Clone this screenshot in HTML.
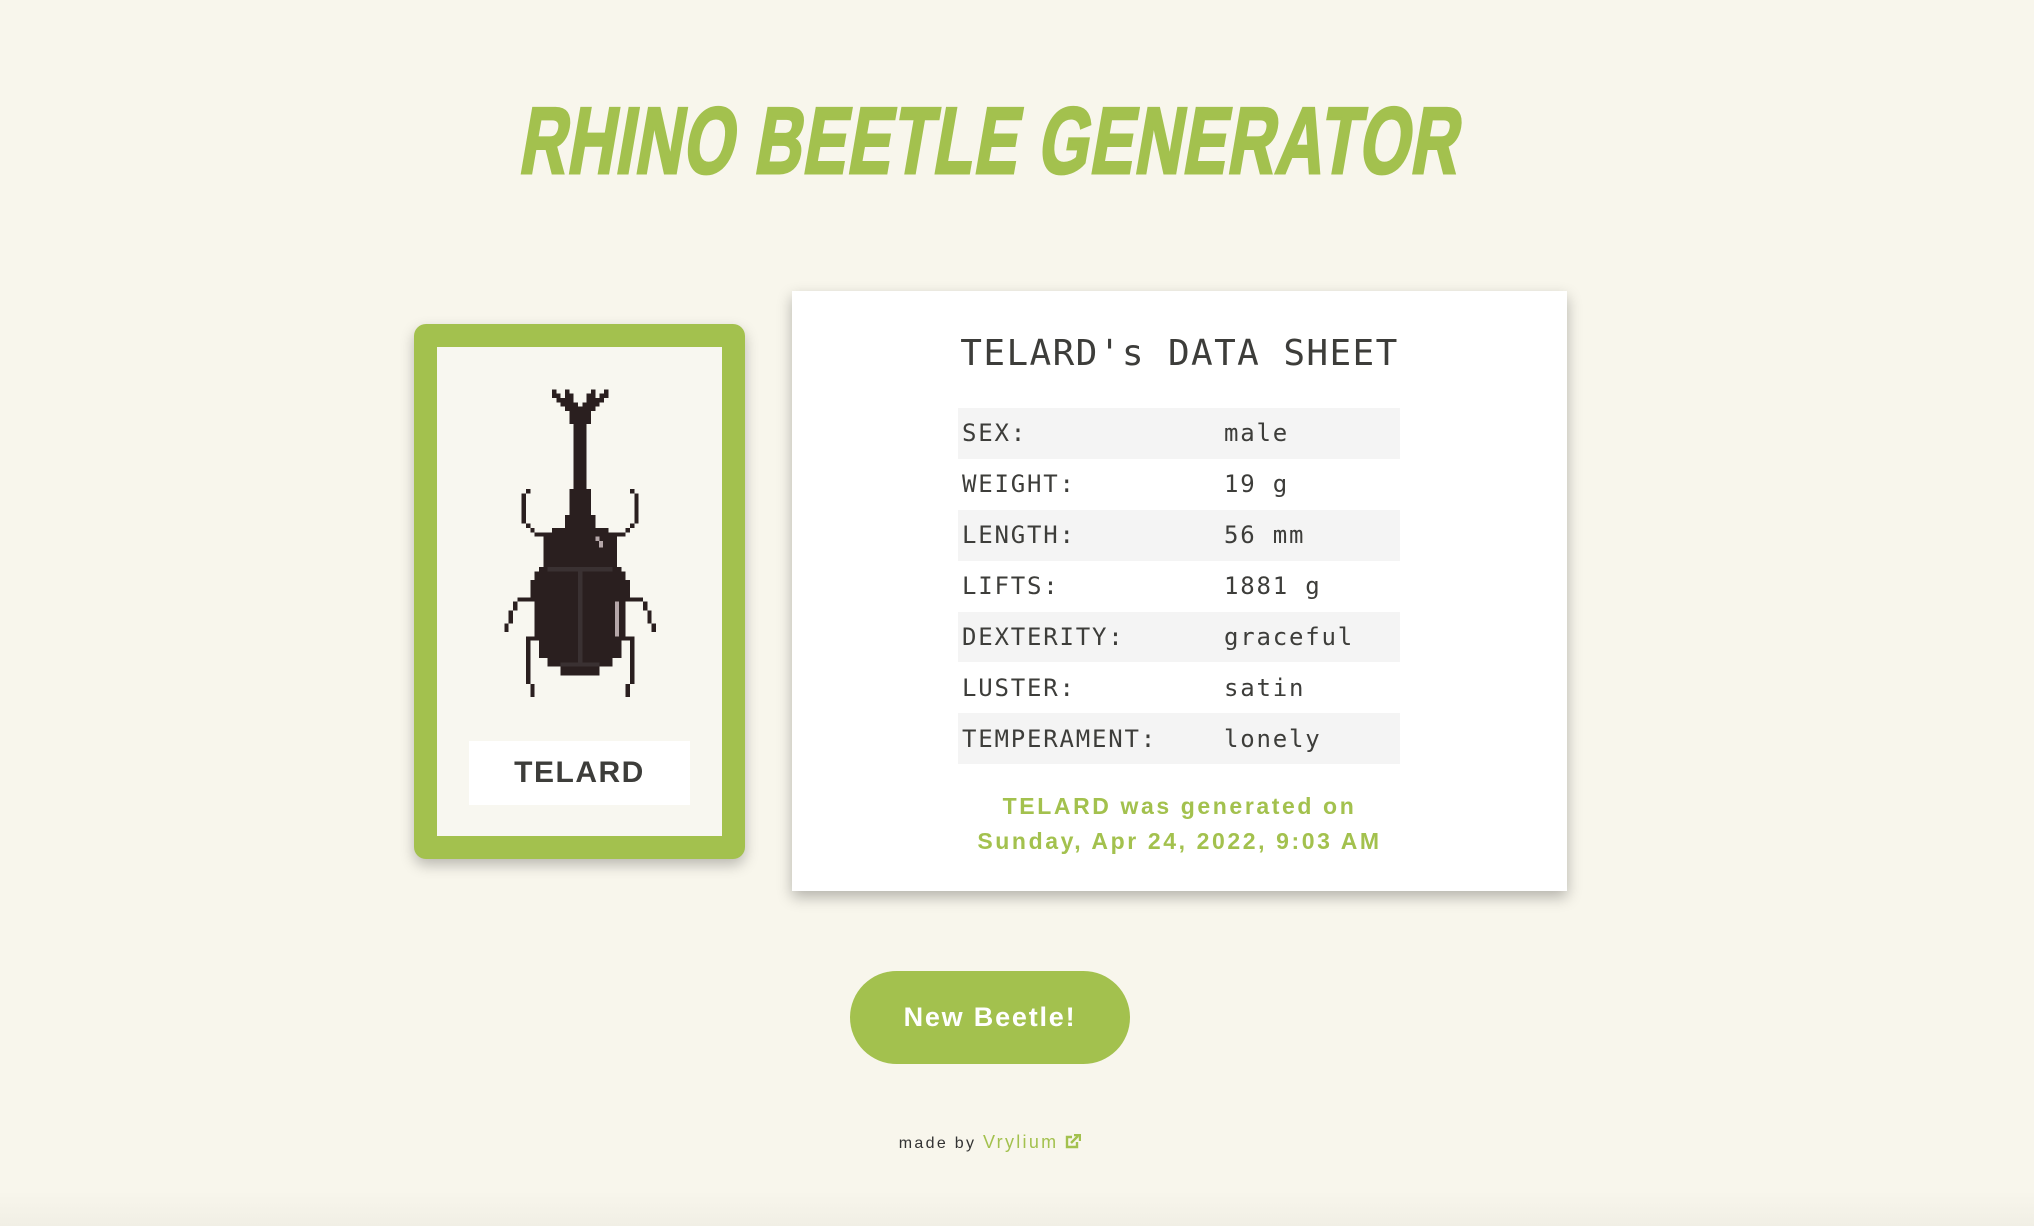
<!DOCTYPE html>
<html><head><meta charset="utf-8"><style>
html,body{margin:0;padding:0}
body{width:2034px;height:1226px;position:relative;overflow:hidden;background:linear-gradient(#f8f6ec 0,#f8f6ec 1190px,#f1efe5 1226px);font-family:"Liberation Sans",sans-serif}
.abs{position:absolute}
#title{left:0;width:1986px;top:86px;text-align:center;height:110px}
#title span{display:inline-block;font-weight:bold;font-size:94px;color:#a3c14e;-webkit-text-stroke:3px #a3c14e;letter-spacing:2px;transform:scaleX(0.69) skewX(-14deg);transform-origin:center;white-space:nowrap;line-height:110px}
#card{left:414px;top:324px;width:285px;height:489px;border:23px solid #a3c14e;border-radius:12px;background:#f8f7f0;box-shadow:0 6px 14px rgba(0,0,0,0.25)}
#name{left:469px;top:741px;width:221px;height:64px;background:#fff;text-align:center;line-height:64px;font-weight:bold;font-size:30px;letter-spacing:1.5px;color:#3d3d3a}
#sheet{left:792px;top:291px;width:775px;height:600px;background:#fff;box-shadow:0 6px 14px rgba(0,0,0,0.28)}
.mono{font-family:"DejaVu Sans Mono","Liberation Mono",monospace;color:#3d3d3a}
#sh{left:792px;width:775px;top:332px;text-align:center;font-size:36px;letter-spacing:1.4px;line-height:44px}
table{position:absolute;left:958px;top:408px;width:442px;border-collapse:collapse}
td{height:50.9px;padding:0;font-size:24px;letter-spacing:1.8px;vertical-align:middle}
td.l{padding-left:4px;width:262px}
tr:nth-child(odd){background:#f4f4f4}
#gen{left:792px;width:775px;top:789px;text-align:center;color:#a3c14e;font-weight:bold;font-size:23px;letter-spacing:2.6px;line-height:35px}
#btn{left:850px;top:971px;width:280px;height:93px;border-radius:47px;background:#a3c14e;color:#fff;font-weight:bold;font-size:27px;letter-spacing:1.8px;text-align:center;line-height:93px}
#foot{left:0;width:1980px;top:1130px;text-align:center;font-size:16px;letter-spacing:2.3px;color:#333;line-height:24px}
#foot b{font-weight:normal;color:#a3c14e;font-size:18px}
</style></head><body>
<div id="title" class="abs"><span>RHINO BEETLE GENERATOR</span></div>
<div id="card" class="abs"></div>
<svg class="abs" style="left:500px;top:385px" width="165" height="320" viewBox="0 0 38.077 73.85" shape-rendering="crispEdges">
<g fill="#2a1f1f">
<rect x="12" y="1" width="1" height="1"/><rect x="15" y="1" width="1" height="1"/><rect x="21" y="1" width="1" height="1"/><rect x="24" y="1" width="1" height="1"/>
<rect x="12" y="2" width="2" height="1"/><rect x="15" y="2" width="2" height="1"/><rect x="20" y="2" width="2" height="1"/><rect x="23" y="2" width="2" height="1"/>
<rect x="13" y="3" width="4" height="1"/><rect x="20" y="3" width="4" height="1"/>
<rect x="14" y="4" width="4" height="1"/><rect x="19" y="4" width="4" height="1"/>
<rect x="15" y="5" width="7" height="1"/>
<rect x="16" y="6" width="5" height="3"/>
<rect x="17" y="9" width="3" height="15"/>
<rect x="16" y="24" width="5" height="6"/>
<rect x="15" y="30" width="7" height="3"/>
<rect x="12" y="33" width="13" height="1"/>
<rect x="10" y="34" width="17" height="8"/>
<rect x="9" y="42" width="19" height="1"/>
<rect x="8" y="43" width="21" height="2"/>
<rect x="7" y="45" width="23" height="5"/>
<rect x="8" y="50" width="21" height="8"/>
<rect x="9" y="58" width="19" height="5"/>
<rect x="11" y="63" width="15" height="2"/>
<rect x="14" y="65" width="9" height="2"/>
<rect x="6" y="24" width="1" height="1"/><rect x="5" y="25" width="1" height="7"/><rect x="6" y="32" width="1" height="1"/><rect x="7" y="33" width="1" height="1"/><rect x="8" y="34" width="2" height="1"/>
<rect x="30" y="24" width="1" height="1"/><rect x="31" y="25" width="1" height="7"/><rect x="30" y="32" width="1" height="1"/><rect x="29" y="33" width="1" height="1"/><rect x="27" y="34" width="2" height="1"/>
<rect x="4" y="49" width="4" height="1"/><rect x="3" y="50" width="1" height="2"/><rect x="2" y="52" width="1" height="3"/><rect x="1" y="55" width="1" height="2"/>
<rect x="29" y="49" width="4" height="1"/><rect x="33" y="50" width="1" height="2"/><rect x="34" y="52" width="1" height="3"/><rect x="35" y="55" width="1" height="2"/>
<rect x="6" y="58" width="3" height="1"/><rect x="6" y="59" width="1" height="10"/><rect x="7" y="69" width="1" height="3"/>
<rect x="28" y="58" width="3" height="1"/><rect x="30" y="59" width="1" height="10"/><rect x="29" y="69" width="1" height="3"/>
</g>
<g fill="#3a3132"><rect x="11" y="42" width="15" height="1"/><rect x="18" y="43" width="1" height="22"/><rect x="14" y="64" width="9" height="1"/></g>
<g fill="#b5a7a9"><rect x="26.5" y="50" width="1" height="8"/><rect x="22" y="35" width="1" height="1"/><rect x="22.8" y="36" width="1" height="1.5"/></g>
</svg>
<div id="name" class="abs">TELARD</div>
<div id="sheet" class="abs"></div>
<div id="sh" class="abs mono">TELARD's DATA SHEET</div>
<table class="mono">
<tr><td class="l">SEX:</td><td>male</td></tr>
<tr><td class="l">WEIGHT:</td><td>19 g</td></tr>
<tr><td class="l">LENGTH:</td><td>56 mm</td></tr>
<tr><td class="l">LIFTS:</td><td>1881 g</td></tr>
<tr><td class="l">DEXTERITY:</td><td>graceful</td></tr>
<tr><td class="l">LUSTER:</td><td>satin</td></tr>
<tr><td class="l">TEMPERAMENT:</td><td>lonely</td></tr>
</table>
<div id="gen" class="abs">TELARD was generated on<br>Sunday, Apr 24, 2022, 9:03 AM</div>
<div id="btn" class="abs">New Beetle!</div>
<div id="foot" class="abs">made by <b>Vrylium</b> <svg width="16" height="15" viewBox="0 0 16 15" style="vertical-align:-1px"><path d="M7 3H2v10h10V8" fill="none" stroke="#a3c14e" stroke-width="2.4"/><path d="M6 9l7-7M9 1h6v6" fill="none" stroke="#a3c14e" stroke-width="2.4"/></svg></div>
</body></html>
